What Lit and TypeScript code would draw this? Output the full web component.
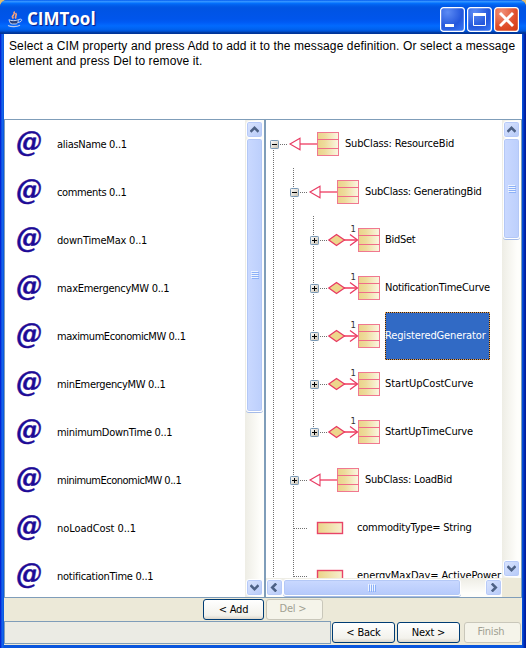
import { LitElement, html, css, svg, nothing } from "lit";
import { customElement, property } from "lit/decorators.js";
import { classMap } from "lit/directives/class-map.js";

type Kind = "sub" | "ref" | "leaf";
interface Node {
  depth: number;
  kind: Kind;
  label: string;
  tracking: number;
  open?: boolean;
  first?: boolean;
  last?: boolean;
  selected?: boolean;
}

const PROPERTIES: [string, number][] = [
  ["aliasName 0..1", -0.3],
  ["comments 0..1", -0.36],
  ["downTimeMax 0..1", -0.2],
  ["maxEmergencyMW 0..1", -0.28],
  ["maximumEconomicMW 0..1", -0.43],
  ["minEmergencyMW 0..1", -0.33],
  ["minimumDownTime 0..1", -0.3],
  ["minimumEconomicMW 0..1", -0.5],
  ["noLoadCost 0..1", -0.07],
  ["notificationTime 0..1", -0.26],
];

const TREE: Node[] = [
  { depth: 0, kind: "sub", label: "SubClass: ResourceBid", tracking: -0.16, open: true, first: true },
  { depth: 1, kind: "sub", label: "SubClass: GeneratingBid", tracking: -0.26, open: true },
  { depth: 2, kind: "ref", label: "BidSet", tracking: -0.28 },
  { depth: 2, kind: "ref", label: "NotificationTimeCurve", tracking: -0.25 },
  { depth: 2, kind: "ref", label: "RegisteredGenerator", tracking: -0.13, selected: true },
  { depth: 2, kind: "ref", label: "StartUpCostCurve", tracking: -0.03 },
  { depth: 2, kind: "ref", label: "StartUpTimeCurve", tracking: -0.2, last: true },
  { depth: 1, kind: "sub", label: "SubClass: LoadBid", tracking: -0.23 },
  { depth: 1, kind: "leaf", label: "commodityType= String", tracking: -0.22 },
  { depth: 1, kind: "leaf", label: "energyMaxDay= ActivePower", tracking: -0.1 },
];

const labelFont = css`
  font-family: "DejaVu Sans Condensed", "DejaVu Sans", sans-serif;
  font-stretch: condensed;
  font-size: 11px;
  letter-spacing: -0.35px;
  white-space: nowrap;
`;

@customElement("scroll-bar")
class ScrollBar extends LitElement {
  @property() dir = "v";
  @property({ type: Number }) thumb = 100;
  static styles = css`
    :host { display: flex; flex: none; box-sizing: border-box; }
    :host([dir="v"]) { flex-direction: column; width: 19px; padding: 1px 1px 1px 1px;
      background: linear-gradient(90deg, #eeede5, #fefefb 80%); }
    :host([dir="h"]) { height: 19px; padding: 1px 0;
      background: linear-gradient(#eeede5, #fefefb 80%); }
    .btn, .thumb { box-sizing: border-box; border: 1px solid #fff; border-radius: 3px; flex: none;
      display: flex; align-items: center; justify-content: center;
      box-shadow: inset 0 0 0 1px #b7caf8; }
    .btn { width: 17px; height: 17px; background: linear-gradient(135deg, #dbe5fe, #b5c9f8); }
    .thumb { background: linear-gradient(90deg, #cad9ff, #bccffc); box-shadow: inset 0 0 0 1px #b4c8f6, 0 1px 0 #a5bbe8; }
    .h { background: linear-gradient(#cad9ff, #b5c9fb); }
    .gap { flex: 1; }
    svg { display: block; }
  `;
  render() {
    const v = this.dir === "v";
    const arrow = (d: string) => html`<div class="btn"><svg width="9" height="9" viewBox="0 0 9 9">
      <path d=${d} fill="none" stroke="#4d6185" stroke-width="2.5" /></svg></div>`;
    const size = v ? `height:${this.thumb}px` : `width:${this.thumb}px`;
    const grip = [0, 2, 4, 6].map((o) => v
      ? svg`<path d="M0 ${o + 0.5}h7" stroke="#eef4fe"/><path d="M1 ${o + 1.5}h7" stroke="#8cb0f8"/>`
      : svg`<path d="M${o + 0.5} 0v7" stroke="#eef4fe"/><path d="M${o + 1.5} 1v7" stroke="#8cb0f8"/>`);
    return html`
      ${arrow(v ? "M.5 6.8L4.5 2.8L8.5 6.8" : "M6.2 .5L2.2 4.5L6.2 8.5")}
      <div class=${classMap({ thumb: true, h: !v })} style=${size}>
        <svg width="8" height="8" viewBox="0 0 8 8">${grip}</svg>
      </div>
      <div class="gap"></div>
      ${arrow(v ? "M.5 2.2L4.5 6.2L8.5 2.2" : "M2.8 .5L6.8 4.5L2.8 8.5")}
    `;
  }
}

@customElement("tree-row")
class TreeRow extends LitElement {
  @property({ attribute: false }) node!: Node;
  static styles = css`
    :host { display: flex; height: 48px; flex: none; }
    .cell { width: 20px; flex: none; display: grid; }
    .cell svg { overflow: visible; }
    svg { display: block; flex: none; }
    .one { font: 9.5px "DejaVu Sans Condensed", "DejaVu Sans", sans-serif; fill: #333; }
    .label { ${labelFont} line-height: 48px; height: 48px; box-sizing: border-box; }
    .selected { background: #316ac5; color: #fff; width: 105px;
      outline: 1px dotted #e8a048; outline-offset: -1px; box-shadow: inset 0 0 0 1px #1c1c30; }
  `;
  private box(x: number) {
    return svg`<rect x=${x + 0.5} y="12.5" width="21" height="23" fill="url(#g)" stroke="#f07890"/>
      <path d="M${x} 19.5h22M${x} 28.5h22" stroke="#f06c88"/>`;
  }
  private icon() {
    const k = this.node.kind;
    const grad = svg`<linearGradient id="g"><stop stop-color="#ebd388"/><stop offset=".35" stop-color="#eedb9c"/><stop offset="1" stop-color="#fbf7e4"/></linearGradient>`;
    if (k === "sub") return html`<svg width="59" height="48">${grad}
      <path d="M14 24h17" stroke="#f48098" stroke-width="2"/>
      <path d="M4 24L14 18.2V29.8Z" fill="#fff" stroke="#e83a62" stroke-width="1.1"/>${this.box(31)}</svg>`;
    if (k === "ref") return html`<svg width="59" height="48">${grad}
      <path d="M18 24h13" stroke="#f45878" stroke-width="1.8"/>
      <path d="M24 18.500L31.500 24L24 29.500" fill="none" stroke="#e83a62" stroke-width="1.3"/>
      <path d="M2.800 24L10.500 18.500L18.500 24L10.500 29.500Z" fill="#edd68c" stroke="#e83a62" stroke-width="1.3"/>
      <text class="one" x="24.5" y="15.500">1</text>${this.box(32)}</svg>`;
    return html`<svg width="51" height="48">
      <linearGradient id="g"><stop stop-color="#ebd388"/><stop offset="1" stop-color="#f7efcf"/></linearGradient>
      <rect x="11.500" y="18.500" width="25" height="11" fill="url(#g)" stroke="#e84468" stroke-width="1.400"/></svg>`;
  }
  render() {
    const n = this.node;
    const dots = (d: string) => svg`<path d=${d} stroke="#707070" stroke-dasharray="1 1" fill="none"/>`;
    const guides = Array.from({ length: n.depth }, () =>
      html`<div class="cell"><svg width="20" height="48">${dots("M7.5 0V48")}</svg></div>`);
    const leaf = n.kind === "leaf";
    return html`${guides}
      <div class="cell"><svg width="20" height="48">
        ${dots(`M7.5 ${n.first ? 24 : 0}V${n.last ? 24 : 48}`)}
        ${dots(leaf ? "M8 24.5H22" : "M14 24.5H21")}
        ${leaf ? nothing : svg`
          <linearGradient id="t" x2="1" y2="1"><stop stop-color="#fff"/><stop offset="1" stop-color="#c8c0b0"/></linearGradient>
          <rect x="4.5" y="20.5" width="8" height="8" rx=".8" fill="url(#t)" stroke="#7898b5"/>
          <path d=${n.open ? "M6 24.5h5" : "M6 24.5h5M8.5 22v5"} stroke="#000"/>`}
      </svg></div>
      ${this.icon()}
      <div class=${classMap({ label: true, selected: !!n.selected })} style="letter-spacing:${n.tracking}px">${n.label}</div>`;
  }
}

@customElement("app-root")
class AppRoot extends LitElement {
  static styles = css`
    :host { display: block; width: 529px; height: 648px; background: #fff; overflow: hidden; color: #000; }
    * { box-sizing: border-box; }
    .corner { width: 526px; height: 648px; background: linear-gradient(#e3bd6c 10px, #fff 10px); }
    .window { width: 526px; height: 648px; display: flex; flex-direction: column; border-radius: 7px 7px 0 0;
      padding: 0 4px 4px; background: linear-gradient(90deg, #0019cf, #0831d9 1px, #166aee 2px, #0855dd 4px, #0855dd 522px, #0144d0 523px, #001ea0 525px);
      overflow: hidden; }
    .title { height: 34px; flex: none; margin: 0 -4px; padding: 4px 7px 0; display: flex; align-items: center;
      background: linear-gradient(#0058ee 0, #3593ff 4%, #288eff 6%, #127dff 8%, #036ffc 10%, #0262ee 14%, #0057e5 20%, #0054e3 24%, #0055eb 56%, #005bf5 66%, #026afe 76%, #0062ef 86%, #0052d6 92%, #0040ab 94%, #003092 100%); }
    .name { font: bold 17px/26px "Open Sans", "Noto Sans", sans-serif; color: #fff; text-shadow: 1px 1px 1px #0a1883;
      margin-left: 4px; letter-spacing: 0; flex: 1; }
    .ctl { display: flex; gap: 2px; }
    .ctl svg { display: block; }
    .intro { height: 85px; flex: none; background: #fff; padding: 5px 0 0 5px; font: 12px/15px "Liberation Sans", Arial, sans-serif;
      letter-spacing: .115px; white-space: nowrap; }
    .panes { height: 479px; flex: none; display: flex; border-top: 1px solid #7f9db9; border-bottom: 1px solid #7f9db9; background: #fff; }
    .left { width: 262px; display: flex; border-left: 1px solid #7f9db9; border-right: 2px solid #7f9db9; }
    .list { flex: 1; overflow: hidden; }
    .item { height: 48px; display: flex; align-items: center; }
    .item svg { flex: none; display: block; margin-left: 10px; }
    .at { font: italic bold 27px "DejaVu Serif", serif; fill: #1d0a96; stroke: #1d0a96; stroke-width: .5px; }
    .text { ${labelFont} margin-left: 12px; }
    .right { width: 256px; display: flex; border-right: 1px solid #7f9db9; }
    .main { width: 236px; display: flex; flex-direction: column; }
    .tree { flex: 1; min-height: 0; overflow: hidden; }
    .side { width: 19px; display: flex; flex-direction: column; background: #ece9d8; }
    .side scroll-bar { height: 458px; }
    .actions { height: 23px; flex: none; background: #ece9d8; display: flex; padding: 1px 0 0 199px; gap: 2px; }
    .foot { height: 24px; flex: none; background: #ece9d8; display: flex; }
    .status { width: 327px; height: 23px; background: #ebebe4; border: 1px solid #7f9db9; }
    .nav { display: flex; padding: 1px 0 0 1px; gap: 2px; }
    .b { ${labelFont} letter-spacing: -.2px; height: 21px; border: 1px solid #003c74; border-radius: 3px; color: #000; padding: 0; text-align: center;
      line-height: 18px; background: linear-gradient(#fff, #f3f2ec 80%, #dcd7cc); }
    .off { border-color: #c9c7ba; color: #a1a192; background: #f5f4ea; }
    .add { width: 61px; } .del { width: 57px; padding: 0 3px 2px 0; }
    .step { width: 63px; } .fin { width: 57px; padding: 0 3px 2px 0; margin-left: 2px; }
  `;
  render() {
    return html`<div class="corner"><div class="window">
      <div class="title">
        <svg width="16" height="18" viewBox="0 0 16 18">
          <path d="M6.500 8.500C3 5.500 9 5.500 7 1.500M9 8.500C7 6 11 5.500 8.500 3" fill="none" stroke="#f4a07c" stroke-width="1.700"/>
          <path d="M2 9.500C3 11 10 11 11.500 9.500C11 13 10.500 14 8 14H5.500C3 14 2.500 12 2 9.500Z" fill="#28427f" stroke="#c8d4ee"/>
          <path d="M12 9.500C16 8 15.500 12 11 12.500" fill="none" stroke="#c8d4ee"/>
          <path d="M1 15.500C4 17 10 17 13 15.300" fill="none" stroke="#b8c8ec" stroke-width="1.300"/>
        </svg>
        <div class="name">CIMTool</div>
        <div class="ctl">
          <svg width="25" height="25" viewBox="0 0 25 25">
            <radialGradient id="b" cx=".3" cy=".2" r="1"><stop stop-color="#5c8bf4"/><stop offset=".6" stop-color="#2457dc"/><stop offset="1" stop-color="#3a78f6"/></radialGradient>
            <rect x=".6" y=".6" width="23.800" height="23.800" rx="3" fill="url(#b)" stroke="#fff" stroke-width="1.200"/><rect x="5" y="17" width="9" height="3" fill="#fff"/></svg>
          <svg width="25" height="25" viewBox="0 0 25 25">
            <rect x=".6" y=".6" width="23.800" height="23.800" rx="3" fill="url(#b)" stroke="#fff" stroke-width="1.200"/>
            <path d="M6.500 8V18.500H18.500V8" fill="none" stroke="#fff"/><rect x="6" y="6" width="13" height="3" fill="#fff"/></svg>
          <svg width="25" height="25" viewBox="0 0 25 25">
            <radialGradient id="r" cx=".3" cy=".2" r="1"><stop stop-color="#f09078"/><stop offset=".6" stop-color="#e04e2a"/><stop offset="1" stop-color="#d23c14"/></radialGradient>
            <rect x=".6" y=".6" width="23.800" height="23.800" rx="3" fill="url(#r)" stroke="#fff" stroke-width="1.200"/>
            <path d="M6 6L19 19M19 6L6 19" stroke="#fff" stroke-width="2.900"/></svg>
        </div>
      </div>
      <div class="intro">Select a CIM property and press Add to add it to the message definition. Or select a message<br>element and press Del to remove it.</div>
      <div class="panes">
        <div class="left">
          <div class="list">${PROPERTIES.map(([name, tracking]) => html`<div class="item">
            <svg width="30" height="48"><text class="at" x="1" y="30.500" textLength="26" lengthAdjust="spacingAndGlyphs">@</text></svg>
            <span class="text" style="letter-spacing:${tracking}px">${name}</span></div>`)}</div>
          <scroll-bar dir="v" .thumb=${274}></scroll-bar>
        </div>
        <div class="right">
          <div class="main">
            <div class="tree">${TREE.map((n) => html`<tree-row .node=${n}></tree-row>`)}</div>
            <scroll-bar dir="h" .thumb=${178}></scroll-bar>
          </div>
          <div class="side"><scroll-bar dir="v" .thumb=${101}></scroll-bar></div>
        </div>
      </div>
      <div class="actions"><button class="b add">&lt; Add</button><button class="b off del">Del &gt;</button></div>
      <div class="foot"><div class="status"></div>
        <div class="nav"><button class="b step">&lt; Back</button><button class="b step">Next &gt;</button><button class="b off fin">Finish</button></div>
      </div>
    </div></div>`;
  }
}
